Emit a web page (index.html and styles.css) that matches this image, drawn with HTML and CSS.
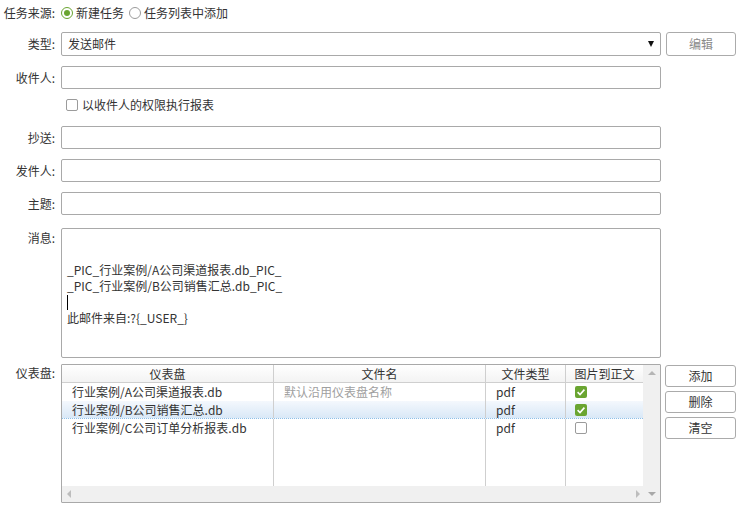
FILE: index.html
```html
<!DOCTYPE html>
<html lang="zh">
<head>
<meta charset="utf-8">
<title>任务</title>
<link rel="stylesheet" href="styles.css">
</head>
<body>
<div class="form">
  <div class="row r-source">
    <span class="label">任务来源:</span>
    <span class="radio on"><span class="dot"></span>新建任务</span>
    <span class="radio"><span class="dot"></span>任务列表中添加</span>
  </div>
  <div class="row r-type">
    <span class="label">类型:</span>
    <div class="field select">发送邮件<span class="arrow"></span></div>
    <button class="btn disabled">编辑</button>
  </div>
  <div class="row r-input r-to">
    <span class="label">收件人:</span>
    <div class="field"></div>
  </div>
  <div class="row r-check">
    <span class="label"></span>
    <span class="check"></span><span>以收件人的权限执行报表</span>
  </div>
  <div class="row r-input r-cc">
    <span class="label">抄送:</span>
    <div class="field"></div>
  </div>
  <div class="row r-input r-from">
    <span class="label">发件人:</span>
    <div class="field"></div>
  </div>
  <div class="row r-input r-subject">
    <span class="label">主题:</span>
    <div class="field"></div>
  </div>
  <div class="row r-msg">
    <span class="label top">消息:</span>
    <div class="field msg">
      <div class="line"></div>
      <div class="line"></div>
      <div class="line">_PIC_行业案例/A公司渠道报表.db_PIC_</div>
      <div class="line">_PIC_行业案例/B公司销售汇总.db_PIC_</div>
      <div class="line"><span class="caret"></span></div>
      <div class="line">此邮件来自:?{_USER_}</div>
    </div>
  </div>
  <div class="row r-dash">
    <span class="label top dash-label">仪表盘:</span>
    <div class="field grid-box">
      <div class="grid-main">
        <div class="trow thead">
          <div class="cell">仪表盘</div>
          <div class="cell">文件名</div>
          <div class="cell">文件类型</div>
          <div class="cell">图片到正文</div>
        </div>
        <div class="trow">
          <div class="cell">行业案例/A公司渠道报表.db</div>
          <div class="cell hint">默认沿用仪表盘名称</div>
          <div class="cell">pdf</div>
          <div class="cell"><span class="cb checked"><svg viewBox="0 0 12 12" width="12" height="12"><path d="M2.6 6.2 L5 8.5 L9.4 3.6" fill="none" stroke="#fff" stroke-width="1.6"/></svg></span></div>
        </div>
        <div class="trow selected">
          <div class="cell">行业案例/B公司销售汇总.db</div>
          <div class="cell"></div>
          <div class="cell">pdf</div>
          <div class="cell"><span class="cb checked"><svg viewBox="0 0 12 12" width="12" height="12"><path d="M2.6 6.2 L5 8.5 L9.4 3.6" fill="none" stroke="#fff" stroke-width="1.6"/></svg></span></div>
        </div>
        <div class="trow">
          <div class="cell">行业案例/C公司订单分析报表.db</div>
          <div class="cell"></div>
          <div class="cell">pdf</div>
          <div class="cell"><span class="cb"></span></div>
        </div>
        <div class="trow tfill">
          <div class="cell"></div>
          <div class="cell"></div>
          <div class="cell"></div>
          <div class="cell"></div>
        </div>
        <div class="hscroll"><span class="tri left"></span><span class="tri right"></span></div>
      </div>
      <div class="vscroll"><span class="tri up"></span><span class="tri down"></span></div>
    </div>
    <div class="side-btns">
      <button class="btn small">添加</button>
      <button class="btn small">删除</button>
      <button class="btn small">清空</button>
    </div>
  </div>
</div>
</body>
</html>
```

FILE: styles.css
```css
html, body {
  margin: 0;
  padding: 0;
  background: #fff;
}
body {
  font-family: "Noto Sans CJK SC", "Microsoft YaHei", sans-serif;
  font-size: 12px;
  line-height: 16px;
  color: #333;
}
.form {
  width: 738px;
  display: flex;
  flex-direction: column;
}
.row {
  display: flex;
  align-items: center;
}
.label {
  flex: none;
  width: 55px;
  margin-right: 6px;
  text-align: right;
  color: #333;
}
.label.top {
  align-self: flex-start;
  padding-top: 2px;
}
.label.dash-label {
  padding-top: 1px;
}
.field {
  flex: none;
  box-sizing: border-box;
  width: 600px;
  height: 23px;
  border: 1px solid #a9a9a9;
  border-radius: 2px;
  background: #fff;
}
.btn {
  flex: none;
  box-sizing: border-box;
  width: 70px;
  height: 24px;
  margin-left: 5px;
  padding: 0;
  border: 1px solid #ababab;
  border-radius: 3px;
  background: #fff;
  font: inherit;
  color: #333;
}
.btn.disabled {
  color: #8a8a8a;
}

/* source row */
.r-source {
  height: 26px;
}
.radio {
  display: flex;
  align-items: center;
  margin-right: 5px;
  color: #333;
}
.r-source .radio:first-of-type {
  margin-left: 1px;
}
.dot {
  box-sizing: border-box;
  width: 12px;
  height: 12px;
  border: 1px solid #9b9b9b;
  border-radius: 50%;
  margin-right: 3px;
  display: flex;
  align-items: center;
  justify-content: center;
  background: #fff;
}
.radio.on .dot {
  border-color: #6aa531;
}
.radio.on .dot::after {
  content: "";
  width: 6px;
  height: 6px;
  border-radius: 50%;
  background: #6aa531;
}

/* type row */
.r-type {
  margin-top: 6px;
}
.select {
  height: 24px;
  display: flex;
  align-items: center;
  padding: 0 6px;
  color: #333;
}
.arrow {
  margin-left: auto;
  width: 0;
  height: 0;
  border-left: 3.5px solid transparent;
  border-right: 3.5px solid transparent;
  border-top: 6px solid #111;
}

/* inputs */
.r-to {
  margin-top: 10px;
}
.r-cc, .r-from, .r-subject {
  margin-top: 10px;
}
.r-check {
  margin-top: 5px;
  height: 22px;
}
.check {
  box-sizing: border-box;
  width: 12px;
  height: 12px;
  margin-left: 5px;
  margin-right: 4px;
  border: 1px solid #9b9b9b;
  border-radius: 2px;
  background: #fff;
}

/* message */
.r-msg {
  margin-top: 13px;
  align-items: flex-start;
}
.msg {
  height: 130px;
  padding: 1px 5px;
  color: #333;
}
.line {
  height: 16px;
  white-space: pre;
  display: flex;
  align-items: center;
}
.caret {
  width: 1px;
  height: 15px;
  background: #000;
}

/* dashboard table */
.r-dash {
  margin-top: 6px;
  align-items: flex-start;
}
.grid-box {
  height: 139px;
  display: flex;
  border-radius: 1px;
}
.grid-main {
  width: 581px;
  display: flex;
  flex-direction: column;
}
.trow {
  display: grid;
  grid-template-columns: 212px 212px 80px 77px;
  height: 18px;
  box-sizing: border-box;
}
.trow .cell {
  box-sizing: border-box;
  border-right: 1px solid #cfcfcf;
  padding-left: 10px;
  display: flex;
  align-items: center;
  white-space: nowrap;
  overflow: hidden;
  color: #333;
}
.trow .cell:last-child {
  border-right: none;
  padding-left: 9px;
}
.thead {
  height: 18px;
  background: linear-gradient(#ffffff, #f3f3f3);
  border-bottom: 1px solid #cfcfcf;
}
.thead .cell {
  justify-content: center;
  padding-left: 0;
}
.thead .cell:last-child {
  border-right: none;
  padding-left: 0;
}
.trow .cell.hint {
  color: #a0a0a0;
}
.trow.selected {
  background: linear-gradient(#f4f8fd, #d9e8f7);
  border-bottom: 1px dotted #8fc0e8;
}
.tfill {
  flex: 1;
  height: auto;
}
.cb {
  box-sizing: border-box;
  width: 12px;
  height: 12px;
  border: 1px solid #9b9b9b;
  border-radius: 2px;
  background: #fff;
  display: block;
}
.cb.checked {
  border: none;
  background: #6aa531;
}
.cb svg {
  display: block;
}
.hscroll {
  height: 16px;
  flex: none;
  background: #f0f0f0;
  display: flex;
  align-items: center;
  justify-content: space-between;
  padding: 0 3px 0 5px;
}
.vscroll {
  width: 17px;
  background: #f0f0f0;
  display: flex;
  flex-direction: column;
  align-items: center;
  justify-content: space-between;
  padding: 6px 0 6px;
  box-sizing: border-box;
}
.tri {
  width: 0;
  height: 0;
  display: block;
}
.tri.up {
  border-left: 4px solid transparent;
  border-right: 4px solid transparent;
  border-bottom: 4px solid #b5b5b5;
}
.tri.down {
  border-left: 4px solid transparent;
  border-right: 4px solid transparent;
  border-top: 4px solid #a8a8a8;
}
.tri.left {
  border-top: 4px solid transparent;
  border-bottom: 4px solid transparent;
  border-right: 4px solid #bdbdbd;
}
.tri.right {
  border-top: 4px solid transparent;
  border-bottom: 4px solid transparent;
  border-left: 4px solid #bdbdbd;
}
.side-btns {
  display: flex;
  flex-direction: column;
  gap: 4px;
  margin-top: 1px;
  margin-left: 4px;
}
.btn.small {
  height: 22px;
  width: 71px;
  margin-left: 0;
}
```
